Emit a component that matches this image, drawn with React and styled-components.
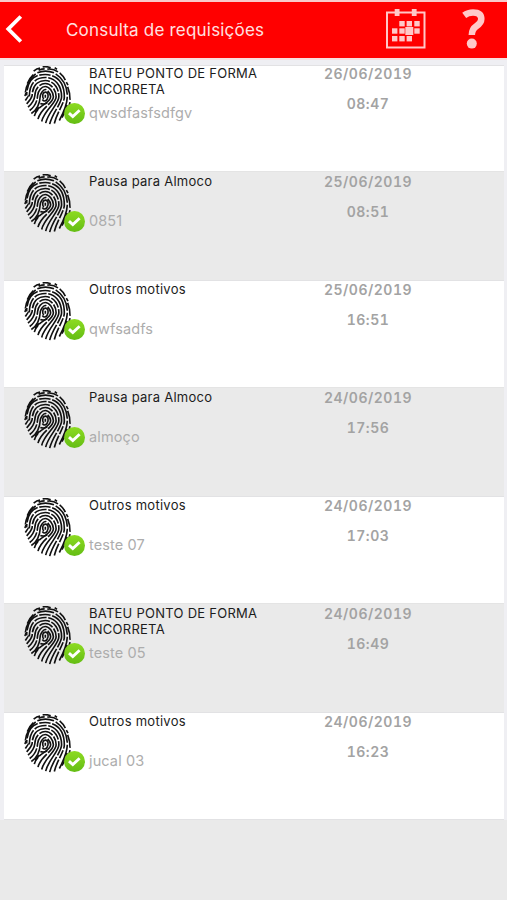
import { useState } from 'react';
import styled, { createGlobalStyle } from 'styled-components';

const requests = [
  { id: 1, title: 'BATEU PONTO DE FORMA INCORRETA', note: 'qwsdfasfsdfgv', date: '26/06/2019', time: '08:47' },
  { id: 2, title: 'Pausa para Almoco', note: '0851', date: '25/06/2019', time: '08:51' },
  { id: 3, title: 'Outros motivos', note: 'qwfsadfs', date: '25/06/2019', time: '16:51' },
  { id: 4, title: 'Pausa para Almoco', note: 'almoço', date: '24/06/2019', time: '17:56' },
  { id: 5, title: 'Outros motivos', note: 'teste 07', date: '24/06/2019', time: '17:03' },
  { id: 6, title: 'BATEU PONTO DE FORMA INCORRETA', note: 'teste 05', date: '24/06/2019', time: '16:49' },
  { id: 7, title: 'Outros motivos', note: 'jucal 03', date: '24/06/2019', time: '16:23' },
];

// days marked on the calendar icon: [x, y]
const days = [[16, 13.7], [23.3, 13.7], [31, 13.7], [8.7, 21], [16, 21], [31, 21], [8.7, 28.7], [16, 28.7], [23.3, 28.7]];

// one ridge per entry: where the left leg ends, where the right leg ends, dashes
const ridges = [
  { left: [22, 142], right: [31, 150], dash: '90 5 70 4' },
  { left: [17, 133], right: [42, 159], dash: '38 5 120 5 60 5' },
  { left: [12, 123], right: [53, 166], dash: '70 5 44 5 150 5' },
  { left: [8, 113], right: [65, 171], dash: '34 5 72 5 36 5 100 5' },
  { left: [4, 103], right: [77, 174], dash: '62 5 38 5 110 5' },
  { left: [3, 90], right: [91, 172], dash: '26 5 58 5 34 5 90 5' },
  { left: [4, 76], right: [106, 163], dash: '48 5 30 5 64 5' },
];

function ridgePath({ left, right }, index) {
  const a = 16 + index * 8.2;
  const top = 70 - index * 9;
  const lx = Math.max(64 - a, 4);
  const rx = 64 + a;
  const c = a * 0.45;
  return `M${left[0]} ${left[1]} Q${lx - 1} ${left[1] - 16} ${lx + 1} 88 C${lx + 2} ${top + 14 - index} ${64 - c} ${top} 64 ${top} C${64 + c} ${top} ${rx} ${top + 16} ${rx} 92 C${rx} 112 ${right[0] + 8} ${right[1] - 34} ${right[0]} ${right[1]}`;
}

function Fingerprint() {
  return (
    <PrintSvg viewBox="0 0 144 176">
      <g fill="none" stroke="#111" strokeWidth="4.9">
        {ridges.slice(0, 6).map((ridge, index) => (
          <path key={index} d={ridgePath(ridge, index)} strokeDasharray={ridge.dash} />
        ))}
        <path d="M4 79 Q9 43 35 23 M40 20 Q64 10 90 20 M95 23 Q128 44 130 86 M130 92 Q129 120 106 163" />
        <path d="M59 99 C53 88 57 78 64 78 C73 78 75 91 69 100 C65 106 59 106 55 100" />
        <path d="M64 86 L64 95 M49 112 Q60 116 70 110 M45 124 Q39 129 34 138" />
        <path d="M29 15 Q38 7 48 6 M44 12 Q54 8 62 8 M56 2 Q70 0 80 5 M70 9 Q88 7 102 17" />
        <path d="M10 52 Q16 36 28 25 M107 20 Q118 29 124 42 M92 5 L99 9" />
        <path d="M131 62 Q139 82 138 101 M127 48 L132 57 M138 108 Q136 124 127 139" />
        <path d="M129 116 Q127 131 114 154" />
      </g>
    </PrintSvg>
  );
}

function CheckBadge() {
  return (
    <BadgeSvg viewBox="0 0 21 21">
      <defs>
        <linearGradient id="badgeGreen" x1="0" y1="0" x2="0" y2="1">
          <stop offset="0" stopColor="#8ddb22" />
          <stop offset="1" stopColor="#64bd14" />
        </linearGradient>
      </defs>
      <circle cx="10.5" cy="10.5" r="10.5" fill="url(#badgeGreen)" />
      <path d="M5 10.2 L8.8 13.6 L15.6 7.2" fill="none" stroke="#fff" strokeWidth="2.9" />
    </BadgeSvg>
  );
}

function RequestRow({ request, shaded }) {
  return (
    <Row $shaded={shaded}>
      <PrintWrapper>
        <Fingerprint />
        <CheckBadge />
      </PrintWrapper>
      <Info>
        <Title>{request.title}</Title>
        <Note>{request.note}</Note>
      </Info>
      <When>
        <span>{request.date}</span>
        <span>{request.time}</span>
      </When>
    </Row>
  );
}

export default function App() {
  const [items] = useState(requests);

  return (
    <Screen>
      <GlobalStyle />
      <Header>
        <IconButton $width={24} aria-label="Voltar">
          <svg width="24" height="32" viewBox="0 0 24 32">
            <path d="M20.8 2.5 L8.3 15 L20.8 27.5" fill="none" stroke="#fff" strokeWidth="3.8" />
          </svg>
        </IconButton>
        <HeaderTitle>Consulta de requisições</HeaderTitle>
        <IconButton $width={40} aria-label="Calendário">
          <svg width="40" height="42" viewBox="0 -1 40 42" fill="#ffc8c8">
            <path d="M1 2.5 H38.5 V37.5 H1 Z" fill="none" stroke="#ffc8c8" strokeWidth="2" />
            <rect x="8.7" y="-1" width="4.8" height="7" />
            <rect x="25.8" y="-1" width="4.8" height="7" />
            {days.map(([x, y]) => (
              <rect key={`${x}-${y}`} x={x - 2.7} y={y - 2.7} width="5.4" height="5.4" />
            ))}
            <rect x="19.3" y="17" width="8" height="8" />
          </svg>
        </IconButton>
        <IconButton $width={24} $gap={35} aria-label="Ajuda">
          <svg width="24" height="42" viewBox="0 -1 24 42">
            <path d="M3.2 5.3 Q7 2.4 12 2.4 Q20.3 2.4 20.3 9 Q20.3 12.8 15.6 16 Q10.8 19.2 10.8 25" fill="none" stroke="#ffc8c8" strokeWidth="6.5" />
            <circle cx="10.8" cy="33.6" r="5" fill="#ffc8c8" />
          </svg>
        </IconButton>
      </Header>
      <List>
        {items.map((item, index) => (
          <RequestRow key={item.id} request={item} shaded={index % 2 === 1} />
        ))}
      </List>
    </Screen>
  );
}

const GlobalStyle = createGlobalStyle`
  body {
    margin: 0;
    background-color: #eaeaea;
  }
  * {
    box-sizing: border-box;
  }
`;

const Screen = styled.div`
  height: 900px;
  overflow: hidden;
  background-color: #eaeaea;
  font-family: Inter, "Liberation Sans", sans-serif;
`;

const Header = styled.header`
  display: flex;
  align-items: center;
  height: 60px;
  background-color: #ff0000;
  border-top: 2px solid #f9caca;
  border-bottom: 2px solid #f8dede;
`;

const HeaderTitle = styled.h1`
  flex: 1;
  margin: 0 0 1px 42px;
  color: #ffe0e0;
  font-size: 17px;
  font-weight: 400;
  letter-spacing: 0.2px;
  line-height: 24px;
`;

const IconButton = styled.button`
  display: flex;
  width: ${(props) => props.$width}px;
  margin: 0;
  margin-left: ${(props) => props.$gap || 0}px;
  padding: 0;
  border: none;
  background: none;
  &:last-child {
    margin-right: 22px;
  }
`;

const Row = styled.div`
  display: flex;
  height: ${(props) => (props.$shaded ? 109 : 107)}px;
  padding-top: ${(props) => (props.$shaded ? 2 : 1)}px;
  padding-left: 20px;
  border-top: 1px solid ${(props) => (props.$shaded ? '#e4e4e4' : '#e2e2e4')};
  background-color: ${(props) => (props.$shaded ? '#eaeaea' : '#fff')};
`;

const List = styled.div`
  padding: 5px 3px 0 4px;
  background-color: #efeff3;
  & > ${Row}:first-child {
    height: 106px;
    padding-top: 0;
  }
  & > ${Row}:last-child {
    height: 108px;
    border-bottom: 1px solid #e2e2e4;
  }
`;

const PrintWrapper = styled.div`
  position: relative;
  width: 65px;
  height: 60px;
`;

const PrintSvg = styled.svg`
  display: block;
  width: 48px;
  height: 59px;
`;

const BadgeSvg = styled.svg`
  position: absolute;
  left: 39.5px;
  top: 37px;
  width: 21px;
  height: 21px;
`;

const Info = styled.div`
  display: flex;
  flex-direction: column;
  width: 190px;
  margin-top: -1px;
`;

const Title = styled.span`
  height: 38px;
  color: #1c1c1c;
  font-size: 13px;
  font-weight: 420;
  letter-spacing: 0.26px;
  line-height: 16px;
`;

const Note = styled.span`
  color: #adadad;
  font-size: 14.5px;
  font-weight: 420;
  letter-spacing: 0.12px;
  line-height: 20px;
`;

const When = styled.div`
  display: flex;
  flex-direction: column;
  align-items: center;
  gap: 10px;
  width: 178px;
  margin-top: -2px;
  color: #a3a3a3;
  font-size: 14px;
  font-weight: 630;
  font-variant-numeric: tabular-nums;
  letter-spacing: 0.5px;
  line-height: 20px;
`;
